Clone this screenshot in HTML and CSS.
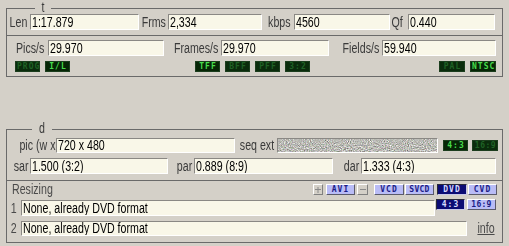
FILE: index.html
```html
<!DOCTYPE html>
<html>
<head>
<meta charset="utf-8">
<title>Info</title>
<link rel="stylesheet" href="styles.css">
</head>
<body>
<div class="page">
  <div class="grp grp-t">
    <span class="grp-title"><span class="tx">t</span></span>
    <div class="row t-r1">
      <span class="lbl l-len"><span class="tx">Len</span></span><span class="fld f-len"><span class="tx">1:17.879</span></span>
      <span class="lbl l-frms"><span class="tx">Frms</span></span><span class="fld f-frms"><span class="tx">2,334</span></span>
      <span class="lbl l-kbps"><span class="tx">kbps</span></span><span class="fld f-kbps"><span class="tx">4560</span></span>
      <span class="lbl l-qf"><span class="tx">Qf</span></span><span class="fld f-qf"><span class="tx">0.440</span></span>
    </div>
    <div class="row sep t-r2">
      <span class="lbl l-pics"><span class="tx">Pics/s</span></span><span class="fld f-pics"><span class="tx">29.970</span></span>
      <span class="lbl l-frames"><span class="tx">Frames/s</span></span><span class="fld f-frames"><span class="tx">29.970</span></span>
      <span class="lbl l-fields"><span class="tx">Fields/s</span></span><span class="fld f-fields"><span class="tx">59.940</span></span>
    </div>
    <div class="row t-r3">
      <div class="leds leds-a"><span class="led">PROG</span><span class="led on">I/L</span></div>
      <div class="leds leds-b"><span class="led on">TFF</span><span class="led">BFF</span><span class="led">PFF</span><span class="led">3:2</span></div>
      <div class="leds leds-c"><span class="led">PAL</span><span class="led on">NTSC</span></div>
    </div>
  </div>

  <div class="grp grp-d">
    <span class="grp-title"><span class="tx">d</span></span>
    <div class="row d-r1">
      <span class="lbl l-pic"><span class="tx">pic (w x</span></span><span class="fld f-pic"><span class="tx">720 x 480</span></span>
      <span class="lbl l-seq"><span class="tx">seq ext</span></span>
      <span class="noise"><svg width="159" height="13" viewBox="0 0 159 13"><filter id="nz" x="0" y="0" width="100%" height="100%" color-interpolation-filters="sRGB"><feTurbulence type="fractalNoise" baseFrequency="0.95" numOctaves="1" seed="4"/><feColorMatrix type="matrix" values="0.6 0.35 0.35 0 0.08  0.35 0.6 0.35 0 0.08  0.35 0.35 0.6 0 0.06  0 0 0 0 1"/></filter><rect width="159" height="13" filter="url(#nz)"/></svg></span>
      <span class="led led-43 on">4:3</span><span class="led led-169">16:9</span>
    </div>
    <div class="row d-r2">
      <span class="lbl l-sar"><span class="tx">sar</span></span><span class="fld f-sar"><span class="tx">1.500 (3:2)</span></span>
      <span class="lbl l-par"><span class="tx">par</span></span><span class="fld f-par"><span class="tx">0.889 (8:9)</span></span>
      <span class="lbl l-dar"><span class="tx">dar</span></span><span class="fld f-dar"><span class="tx">1.333 (4:3)</span></span>
    </div>
    <div class="row sep d-r3">
      <span class="res-lbl"><span class="tx">Resizing</span></span>
      <div class="btns">
        <span class="btn gray b-plus"><svg width="6" height="6" viewBox="0 0 6 6"><path d="M0 2.5H6M3 0V6" stroke="#8a8a8a" stroke-width="1" fill="none"/></svg></span>
        <span class="btn b-avi">AVI</span>
        <span class="btn gray b-minus"><svg width="6" height="2" viewBox="0 0 6 2"><path d="M0 0.5H6" stroke="#8a8a8a" stroke-width="1" fill="none"/></svg></span>
        <span class="btn b-vcd">VCD</span>
        <span class="btn b-svcd">SVCD</span>
        <span class="btn sel b-dvd">DVD</span>
        <span class="btn b-cvd">CVD</span>
      </div>
    </div>
    <div class="row d-r4">
      <span class="lbl l-n"><span class="tx">1</span></span><span class="fld f-r1"><span class="tx">None, already DVD format</span></span>
      <span class="btn sel b-43">4:3</span><span class="btn b-169">16:9</span>
    </div>
    <div class="row d-r5">
      <span class="lbl l-n"><span class="tx">2</span></span><span class="fld f-r2"><span class="tx">None, already DVD format</span></span>
      <span class="lbl l-info"><span class="tx info">info</span></span>
    </div>
  </div>
</div>
</body>
</html>
```

FILE: styles.css
```css
* { box-sizing: border-box; }
html, body { margin: 0; padding: 0; }
body {
  width: 509px;
  height: 246px;
  overflow: hidden;
  background: #d4d0c8;
  font-family: "Liberation Sans", Arial, sans-serif;
  font-size: 14px;
  color: #3a3a3a;
}
.page { padding: 8px 6px 0 6px; }

/* horizontally condensed text, like the narrow UI font */
.tx {
  display: inline-block;
  flex: none;
  transform: scaleX(0.76);
  transform-origin: left center;
  white-space: nowrap;
}
.lbl .tx { transform-origin: right center; }
.grp-title .tx { transform-origin: center center; }

.grp { position: relative; border: 1px solid #6a6a6a; }
.grp-d { margin-top: 52px; }
.grp-title {
  position: absolute;
  top: -9px;
  padding: 0 6px;
  background: #d4d0c8;
  line-height: 14px;
  height: 14px;
}
.grp-t .grp-title { left: 28px; }
.grp-d .grp-title { left: 25px; }

.row { display: flex; align-items: flex-start; }
.sep { border-top: 1px solid #6a6a6a; }

.lbl {
  flex: none;
  display: flex;
  justify-content: flex-end;
  padding-right: 3px;
  line-height: 16px;
  white-space: nowrap;
}
.fld {
  flex: none;
  height: 16px;
  background: #f9f7e8;
  border: 1px solid;
  border-color: #8a8884 #ffffff #ffffff #8a8884;
  color: #000;
  line-height: 14px;
  padding-left: 1px;
  white-space: nowrap;
  overflow: hidden;
}

/* group t */
.t-r1 { padding: 5px 0; }
.t-r2 { padding-top: 4px; }
.t-r3 { padding: 5px 6px 4px 0; }

.l-len { width: 23px; }
.f-len { width: 109px; }
.l-frms { width: 29px; padding-right: 2px; }
.f-frms { width: 94px; }
.l-kbps { width: 32px; }
.f-kbps { width: 96px; }
.l-qf { width: 18px; padding-right: 5px; }
.f-qf { width: 87px; }

.l-pics { width: 41px; padding-right: 4px; }
.f-pics { width: 116px; }
.l-frames { width: 57px; }
.f-frames { width: 108px; }
.l-fields { width: 53px; }
.f-fields { width: 114px; }

.leds { display: flex; gap: 5px; }
.leds-a { margin-left: 8px; }
.leds-b { margin-left: 125px; }
.leds-c { margin-left: auto; }
.leds-c .led { width: 26px; }

.led {
  flex: none;
  width: 25px;
  height: 11px;
  background: #0a2c0c;
  border: 1px solid #1b3d1d;
  color: #1f6125;
  font-family: "DejaVu Sans Mono", "Liberation Mono", monospace;
  font-weight: bold;
  font-size: 8px;
  line-height: 9px;
  letter-spacing: 1px;
  text-indent: 1px;
  text-align: center;
  white-space: nowrap;
  overflow: hidden;
}
.led.on { color: #48dc4c; background: #062606; }

/* group d */
.d-r1 { padding-top: 8px; }
.d-r1 .fld { height: 15px; line-height: 13px; }
.d-r1 .lbl { line-height: 15px; }
.l-pic { width: 49px; padding-right: 1px; }
.f-pic { width: 179px; }
.l-seq { width: 42px; }
.noise {
  flex: none;
  width: 161px;
  height: 15px;
  border: 1px solid;
  border-color: #8a8884 #ffffff #ffffff #8a8884;
  display: block;
}
.noise svg { display: block; }
.led-43 { margin: 2px 0 0 5px; }
.led-169 { margin: 2px 0 0 4px; width: 26px; letter-spacing: 0.5px; }

.d-r2 { padding: 5px 0 6px; }
.l-sar { width: 23px; padding-right: 2px; }
.f-sar { width: 138px; }
.l-par { width: 26px; padding-right: 2px; }
.f-par { width: 139px; }
.l-dar { width: 28px; padding-right: 2px; }
.f-dar { width: 135px; }

.d-r3 { padding: 3px 5px 0 5px; align-items: center; height: 15px; }
.res-lbl { line-height: 11px; color: #4a4a4a; }
.btns { display: flex; margin-left: auto; }

.btn {
  flex: none;
  height: 11px;
  background: #b9bcf6;
  border: 1px solid;
  border-color: #ffffff #5a5a6a #5a5a6a #ffffff;
  color: #1c1c86;
  font-family: "DejaVu Sans Mono", "Liberation Mono", monospace;
  font-weight: bold;
  font-size: 8px;
  line-height: 9px;
  letter-spacing: 1px;
  text-align: center;
  white-space: nowrap;
  overflow: hidden;
  display: flex;
  align-items: center;
  justify-content: center;
}
.btn.gray { background: #d4d0c8; border-color: #ffffff #808080 #808080 #ffffff; }
.btn.sel {
  background: #0c0c74;
  color: #d8dcff;
  border-color: #2a2a3a #c8c8e8 #c8c8e8 #2a2a3a;
}
.b-plus { width: 10px; }
.b-avi { width: 29px; margin-left: 3px; }
.b-minus { width: 11px; margin-left: 2px; }
.b-vcd { width: 30px; margin-left: 6px; }
.b-svcd { width: 29px; margin-left: 1px; letter-spacing: 0.3px; }
.b-dvd { width: 30px; margin-left: 3px; }
.b-cvd { width: 29px; margin-left: 1px; }

.d-r4 { margin-top: 4px; }
.l-n { width: 14px; padding-right: 4px; color: #4a4a4a; }
.d-r4 .l-n, .d-r4 .fld { margin-top: 1px; }
.f-r1 { width: 414px; }
.b-43 { width: 29px; margin-left: 1px; }
.b-169 { width: 29px; margin-left: 2px; letter-spacing: 0.3px; }

.d-r5 { margin-top: 5px; padding-bottom: 6px; }
.d-r5 .fld { height: 15px; line-height: 13px; }
.d-r5 .lbl { line-height: 15px; }
.f-r2 { width: 446px; }
.l-info { width: 29px; padding-right: 1px; }
.info { text-decoration: underline; color: #4a4a4a; }
```
